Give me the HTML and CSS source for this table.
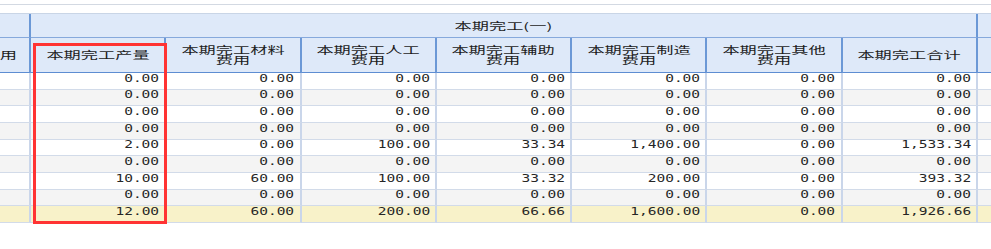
FILE: index.html
```html
<!DOCTYPE html>
<html lang="zh-CN">
<head>
<meta charset="utf-8">
<title>本期完工</title>
<link rel="stylesheet" href="styles.css">
</head>
<body>
<div class="page">
  <div class="topline"></div>
  <div class="sheet">
    <div class="grid">
      <div class="hrow first">
        <div class="hc edge-l"></div>
        <div class="hc group"><span class="cn">本期完工(一)</span></div>
        <div class="hc edge-r"></div>
      </div>
      <div class="hrow second">
        <div class="hc edge-l tail"><span class="cn tail-t">用</span></div>
        <div class="hc"><span class="cn">本期完工产量</span></div>
        <div class="hc"><span class="cn">本期完工材料<br>费用</span></div>
        <div class="hc"><span class="cn">本期完工人工<br>费用</span></div>
        <div class="hc"><span class="cn">本期完工辅助<br>费用</span></div>
        <div class="hc"><span class="cn">本期完工制造<br>费用</span></div>
        <div class="hc"><span class="cn">本期完工其他<br>费用</span></div>
        <div class="hc"><span class="cn">本期完工合计</span></div>
        <div class="hc edge-r"></div>
      </div>

      <div class="row">
        <div class="c edge-l"></div>
        <div class="c"><span class="num">0.00</span></div><div class="c"><span class="num">0.00</span></div><div class="c"><span class="num">0.00</span></div><div class="c"><span class="num">0.00</span></div><div class="c"><span class="num">0.00</span></div><div class="c"><span class="num">0.00</span></div><div class="c"><span class="num">0.00</span></div>
        <div class="c edge-r"></div>
      </div>
      <div class="row alt">
        <div class="c edge-l"></div>
        <div class="c"><span class="num">0.00</span></div><div class="c"><span class="num">0.00</span></div><div class="c"><span class="num">0.00</span></div><div class="c"><span class="num">0.00</span></div><div class="c"><span class="num">0.00</span></div><div class="c"><span class="num">0.00</span></div><div class="c"><span class="num">0.00</span></div>
        <div class="c edge-r"></div>
      </div>
      <div class="row">
        <div class="c edge-l"></div>
        <div class="c"><span class="num">0.00</span></div><div class="c"><span class="num">0.00</span></div><div class="c"><span class="num">0.00</span></div><div class="c"><span class="num">0.00</span></div><div class="c"><span class="num">0.00</span></div><div class="c"><span class="num">0.00</span></div><div class="c"><span class="num">0.00</span></div>
        <div class="c edge-r"></div>
      </div>
      <div class="row alt">
        <div class="c edge-l"></div>
        <div class="c"><span class="num">0.00</span></div><div class="c"><span class="num">0.00</span></div><div class="c"><span class="num">0.00</span></div><div class="c"><span class="num">0.00</span></div><div class="c"><span class="num">0.00</span></div><div class="c"><span class="num">0.00</span></div><div class="c"><span class="num">0.00</span></div>
        <div class="c edge-r"></div>
      </div>
      <div class="row">
        <div class="c edge-l"></div>
        <div class="c"><span class="num">2.00</span></div><div class="c"><span class="num">0.00</span></div><div class="c"><span class="num">100.00</span></div><div class="c"><span class="num">33.34</span></div><div class="c"><span class="num">1,400.00</span></div><div class="c"><span class="num">0.00</span></div><div class="c"><span class="num">1,533.34</span></div>
        <div class="c edge-r"></div>
      </div>
      <div class="row alt">
        <div class="c edge-l"></div>
        <div class="c"><span class="num">0.00</span></div><div class="c"><span class="num">0.00</span></div><div class="c"><span class="num">0.00</span></div><div class="c"><span class="num">0.00</span></div><div class="c"><span class="num">0.00</span></div><div class="c"><span class="num">0.00</span></div><div class="c"><span class="num">0.00</span></div>
        <div class="c edge-r"></div>
      </div>
      <div class="row">
        <div class="c edge-l"></div>
        <div class="c"><span class="num">10.00</span></div><div class="c"><span class="num">60.00</span></div><div class="c"><span class="num">100.00</span></div><div class="c"><span class="num">33.32</span></div><div class="c"><span class="num">200.00</span></div><div class="c"><span class="num">0.00</span></div><div class="c"><span class="num">393.32</span></div>
        <div class="c edge-r"></div>
      </div>
      <div class="row alt">
        <div class="c edge-l"></div>
        <div class="c"><span class="num">0.00</span></div><div class="c"><span class="num">0.00</span></div><div class="c"><span class="num">0.00</span></div><div class="c"><span class="num">0.00</span></div><div class="c"><span class="num">0.00</span></div><div class="c"><span class="num">0.00</span></div><div class="c"><span class="num">0.00</span></div>
        <div class="c edge-r"></div>
      </div>
      <div class="row total">
        <div class="c edge-l"></div>
        <div class="c"><span class="num">12.00</span></div><div class="c"><span class="num">60.00</span></div><div class="c"><span class="num">200.00</span></div><div class="c"><span class="num">66.66</span></div><div class="c"><span class="num">1,600.00</span></div><div class="c"><span class="num">0.00</span></div><div class="c"><span class="num">1,926.66</span></div>
        <div class="c edge-r"></div>
      </div>
    </div>
  </div>
  <div class="mark"></div>
</div>
</body>
</html>
```

FILE: styles.css
```css
html, body {
  margin: 0;
  padding: 0;
  background: #ffffff;
}

.page {
  position: relative;
  width: 991px;
  height: 249px;
  overflow: hidden;
}

.topline {
  height: 4px;
  border-bottom: 1px solid #d3d9e2;
  margin-bottom: 8px;
}

.sheet {
  width: 991px;
  overflow: hidden;
}

.grid {
  display: grid;
  grid-template-columns: 31px repeat(7, 135.25px) 40px;
  grid-template-rows: 24px 35px repeat(9, 16.67px);
  border-top: 1px solid #c9d5e6;
  width: max-content;
}

.hrow, .row {
  display: contents;
}

.hc {
  box-sizing: border-box;
  background: #dee9f9;
  border-right: 2px solid #6b98d6;
  display: flex;
  align-items: center;
  justify-content: center;
  text-align: center;
}

.first .hc {
  border-bottom: 1px solid #86a9dc;
}

.second .hc {
  border-bottom: 1px solid #5d8dd2;
}

.group {
  grid-column: 2 / span 7;
}

.edge-r {
  border-right: none !important;
}

.tail {
  justify-content: flex-end;
  padding-right: 12px;
}

.cn {
  display: inline-block;
  font-family: "Noto Sans CJK SC", "Noto Sans", sans-serif;
  font-size: 10px;
  line-height: 10px;
  color: #1c1c1c;
  transform: scaleX(1.72);
  transform-origin: center center;
  white-space: nowrap;
}

.tail-t {
  transform-origin: right center;
}

.c {
  box-sizing: border-box;
  background: #ffffff;
  border-right: 2px solid #cad6ea;
  border-bottom: 1px solid #d2dbe9;
  display: flex;
  align-items: center;
  justify-content: flex-end;
  padding: 0 5px 4px 0;
}

.alt .c {
  background: #f4f4f4;
}

.total .c {
  background: #f8f2c9;
}

.num {
  display: inline-block;
  font-family: "DejaVu Sans Mono", "Liberation Mono", monospace;
  font-size: 10px;
  line-height: 10px;
  color: #262626;
  transform: scaleX(1.45);
  transform-origin: right center;
  white-space: nowrap;
}

.mark {
  position: absolute;
  left: 33px;
  top: 43px;
  width: 134px;
  height: 181px;
  box-sizing: border-box;
  border: 3px solid #ff3333;
}
```
